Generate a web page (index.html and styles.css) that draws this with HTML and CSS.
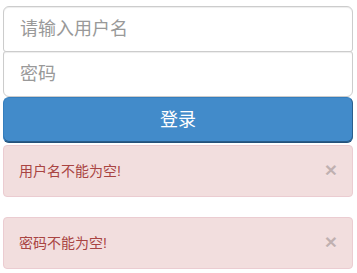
FILE: index.html
```html
<!DOCTYPE html>
<html>
<head>
<meta charset="utf-8">
<link rel="stylesheet" href="styles.css">
</head>
<body>
<form class="signin">
  <input class="field field-top" type="text" placeholder="请输入用户名">
  <input class="field field-bottom" type="password" placeholder="密码">
  <button class="btn-login" type="button">登录</button>
  <div class="alerts">
    <div class="alert">
      <span class="alert-text">用户名不能为空!</span>
      <span class="close">×</span>
    </div>
    <div class="alert">
      <span class="alert-text">密码不能为空!</span>
      <span class="close">×</span>
    </div>
  </div>
</form>
</body>
</html>
```

FILE: styles.css
```css
html, body {
  margin: 0;
  padding: 0;
  background: #fff;
}
body {
  font-family: "Liberation Sans", "Noto Sans CJK SC", sans-serif;
  font-size: 14px;
  line-height: 20px;
  color: #333;
}
.signin {
  width: 350px;
  padding: 6px 0 0 3px;
  display: flex;
  flex-direction: column;
}
.field {
  display: block;
  box-sizing: border-box;
  width: 100%;
  height: 46px;
  padding: 10px 16px;
  font-family: "Liberation Sans", "Noto Sans CJK SC", sans-serif;
  font-size: 18px;
  line-height: 24px;
  color: #555;
  background: #fff;
  border: 1px solid #ccc;
  border-radius: 6px;
  box-shadow: inset 0 1px 1px rgba(0,0,0,.075);
  outline: none;
  margin: 0;
}
.field::placeholder {
  color: #999;
}
.field-top {
  margin-bottom: -1px;
  border-bottom-left-radius: 3px;
  border-bottom-right-radius: 3px;
}
.field-bottom {
  border-top-left-radius: 3px;
  border-top-right-radius: 3px;
}
.btn-login {
  display: block;
  box-sizing: border-box;
  width: 100%;
  height: 46px;
  margin: 0;
  padding: 10px 16px;
  font-family: "Liberation Sans", "Noto Sans CJK SC", sans-serif;
  font-size: 18px;
  line-height: 24px;
  color: #fff;
  background: #428bca;
  border: 1px solid #357ebd;
  border-bottom-color: #24527a;
  border-right-color: #2c5f8c;
  border-radius: 6px;
  box-shadow: inset 0 -1px 0 #2a5d8a;
}
.alerts {
  margin-top: 2px;
  display: flex;
  flex-direction: column;
  gap: 20px;
}
.alert {
  display: flex;
  justify-content: space-between;
  align-items: flex-start;
  padding: 15px;
  background: #f2dede;
  border: 1px solid #ebccd1;
  border-radius: 4px;
  color: #a94442;
  font-size: 14px;
  line-height: 20px;
}
.close {
  margin-top: -2px;
  font-size: 21px;
  font-weight: bold;
  line-height: 21px;
  color: #000;
  opacity: .2;
  text-shadow: 0 1px 0 #fff;
}
```
